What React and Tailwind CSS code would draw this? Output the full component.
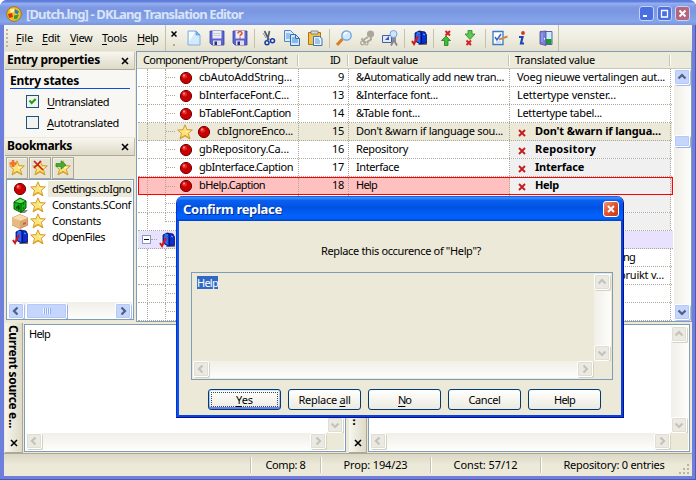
import React, { useLayoutEffect, useRef } from "react";

/* Text set to a fixed advance width; tracking is derived from the measured width. */
function Fit({ w, children, className = "" }) {
  const ref = useRef(null);
  useLayoutEffect(() => {
    const el = ref.current;
    el.style.letterSpacing = "0px";
    const natural = el.getBoundingClientRect().width;
    const n = el.textContent.length;
    el.style.letterSpacing = (w - natural) / n + "px";
  }, [w]);
  return (
    <span ref={ref} className={"inline-block whitespace-pre " + className}>
      {children}
    </span>
  );
}

function Mnemonic({ text, at }) {
  return (
    <>
      {text.slice(0, at)}
      <span className="underline underline-offset-2">{text[at]}</span>
      {text.slice(at + 1)}
    </>
  );
}

function Svg({ children, size = 16, className = "" }) {
  return (
    <svg width={size} height={size} viewBox="0 0 16 16" className={"block shrink-0 " + className}>
      {children}
    </svg>
  );
}

const STAR = "M8 .8 10 5.6l5.3.3-4 3.5 1.7 5.6L8 12l-5 3 1.5-5.6L.7 6l5.3-.4z";

const Ball = () => (
  <Svg>
    <circle cx="8" cy="8" r="5.6" fill="#c80000" stroke="#7a0000" strokeWidth="1" />
    <circle cx="6.6" cy="6.2" r="2.4" fill="#e42a2a" />
    <circle cx="6" cy="5.5" r="1" fill="#ff9c9c" />
  </Svg>
);
const Star = ({ children }) => (
  <Svg>
    <path d={STAR} fill="#fbe27a" stroke="#cf9524" strokeWidth=".9" strokeLinejoin="round" />
    <path d="M8 3 8.8 7 13 7 9.5 9z" fill="#fff6c4" />
    <path d="M4 13.5 8 11.3l4 2.4" fill="none" stroke="#d9a21c" strokeWidth="1" />
    {children}
  </Svg>
);
const Mailbox = () => (
  <Svg>
    <path d="M9 12h7v3H7z" fill="#777" />
    <path d="M4 3 8 1l6 1 1.5 3v8L9 14 4 11z" fill="#0b2fd0" stroke="#04125e" strokeWidth=".8" />
    <path d="M5 3.5 9 4.5V13L5 10.5z" fill="#2c66f5" />
    <path d="M8 1.5c3 0 3 2 2.5 4v8" stroke="#04125e" fill="none" />
    <path d="M6 3h3M12 4l2 1" stroke="#5cb0ff" />
    <path d="M1 11l2 3 4-8" fill="none" stroke="#d01818" strokeWidth="2" />
  </Svg>
);
const Cube = () => (
  <Svg>
    <path d="M10 13h6l-3 3H8z" fill="#888" />
    <path d="M2 5 8 1l6 3v7l-5 4.5L2 12z" fill="#12b512" stroke="#075f07" />
    <path d="M2 5l7 2 5-3M9 7v8" stroke="#075f07" fill="none" />
    <path d="M3 5 8 2l5 2-4 2z" fill="#5fe35f" />
    <path d="M6.8 8v5M6.8 8 4 11h4" stroke="#033803" fill="none" />
    <path d="M11 7h1M11 11h1" stroke="#033803" />
  </Svg>
);
const Box = () => (
  <Svg>
    <path d="M0 5 8 1.5 16 5v7l-8 3.5L0 12z" fill="#d9a86c" stroke="#a87840" strokeWidth=".7" />
    <path d="M0 5 8 1.5 16 5 8 8z" fill="#f7dcae" />
    <path d="M0 5 8 8v7.5L0 12z" fill="#e7bb80" />
    <path d="M11 10l3-1v2l-3 1z" fill="#d8564a" />
  </Svg>
);
const NewDoc = () => (
  <Svg>
    <path d="M2 1h8l4 4v10H2z" fill="#d3eafe" stroke="#7fb0e2" />
    <path d="M3 2h6L3 12z" fill="#f6fbff" />
    <path d="M10 1v4h4z" fill="#7ab6ef" stroke="#5292d2" strokeWidth=".6" />
  </Svg>
);
const Floppy = ({ ask }) => (
  <Svg>
    <path d="M1 1h14v14H3l-2-2z" fill="#5a63cf" stroke="#3a3f9e" strokeWidth=".8" />
    <path d="M3.5 1h9v7.5h-9z" fill="#eceef4" />
    {!ask && <path d="M4.5 3.5h7M4.5 5.5h7" stroke="#c8cbd8" />}
    <path d="M4 10.5h8V15H4z" fill="#dfe0ea" />
    <path d="M5.5 11.5h2.5V15H5.5z" fill="#2a2f86" />
    {ask && <path d="M6 3.5C6 .8 10.3 1 10 3.3 9.8 4.6 8 4.7 8 6.2M8 7.3V8.6" stroke="#e5502c" strokeWidth="1.5" fill="none" />}
  </Svg>
);
const Cut = () => (
  <Svg>
    <path d="M3.5 1 8 10M8.5 1 6.5 10" stroke="#55606e" strokeWidth="1.7" fill="none" />
    <path d="M2 3l3 5" stroke="#8e98a4" />
    <circle cx="6" cy="12.8" r="2" fill="none" stroke="#123cae" strokeWidth="1.5" />
    <circle cx="11.5" cy="10.8" r="2" fill="none" stroke="#123cae" strokeWidth="1.5" />
  </Svg>
);
const Copy = () => (
  <Svg>
    <path d="M.5.5h6l3 3v8h-9z" fill="#d9edff" stroke="#4c88c8" />
    <path d="M2 4h4M2 6h5M2 8h4" stroke="#5b97d8" />
    <path d="M6.5 4.5h5l4 4v7h-9z" fill="#cfe7ff" stroke="#336db3" />
    <path d="M8 8h3M8 10h6M8 12h6" stroke="#4a86cc" />
    <path d="M11.5 4.5v4h4" fill="none" stroke="#336db3" />
  </Svg>
);
const Paste = () => (
  <Svg>
    <path d="M1.5 2.5h12v12h-12z" fill="#f3c04a" stroke="#a97414" />
    <path d="M4 1h7v3H4z" fill="#d8d8d8" stroke="#777" strokeWidth=".8" />
    <path d="M6.5 6.5h6l2.5 2v7H6.5z" fill="#e6f2ff" stroke="#3e73b5" />
    <path d="M8 9h4M8 11h5M8 13h5" stroke="#5b97d8" />
  </Svg>
);
const Find = () => (
  <Svg>
    <path d="M1 15 6.5 9" stroke="#d97e22" strokeWidth="3" />
    <circle cx="10.5" cy="5.5" r="4.7" fill="#cdeaff" stroke="#6d9edb" strokeWidth="1.3" />
    <path d="M8 5c.5-2 2-2.5 3.5-2.3" stroke="#fff" strokeWidth="1.5" fill="none" />
  </Svg>
);
const FindNext = () => (
  <Svg>
    <circle cx="11.5" cy="4" r="3.6" fill="#aca899" />
    <path d="M9 7 5 9.5M2.5 8.5l4 4.5M11.5 7c2 4-2 3-3.5 5.5" stroke="#aca899" strokeWidth="2" fill="none" />
    <circle cx="3.5" cy="13" r="1.8" fill="none" stroke="#aca899" strokeWidth="1.3" />
    <circle cx="7.5" cy="13.5" r="1.5" fill="none" stroke="#aca899" strokeWidth="1.2" />
  </Svg>
);
const Replace = () => (
  <Svg>
    <path d="M.5 5.5h9v7h-9z" fill="#dfe9fb" stroke="#4b5f96" />
    <path d="M3 10 7 6v4z" fill="#2d58c8" />
    <path d="M10 8h3v4l2 3.5M12 10l-3 5.5M11 8v5" stroke="#83868e" strokeWidth="1.8" fill="none" />
    <circle cx="11.5" cy="4" r="3.5" fill="#c8e7ff" stroke="#7fa3cf" />
  </Svg>
);
const CROSS = "l4.5 4.5m0-4.5-4.5 4.5";
const Prev = () => (
  <Svg>
    <path d="M6 6 10.5 10.5H8v5H4.5v-5H1.5z" fill="#43bb38" stroke="#1f7d1a" strokeWidth=".8" />
    <path d={"M5.5 1" + CROSS} stroke="#d42020" strokeWidth="2" />
  </Svg>
);
const Next = () => (
  <Svg>
    <path d="M5 .5h4V4h3L7 9.5 2 4h3z" fill="#5cc650" stroke="#2a8a24" strokeWidth=".8" />
    <path d={"M3.5 10.5" + CROSS} stroke="#d42020" strokeWidth="2" />
  </Svg>
);
const Settings = () => (
  <Svg>
    <path d="M1 1.5h10v13H1z" fill="#fff" stroke="#3b79c6" strokeWidth="1.3" />
    <path d="M3 7l2 3 4-6" stroke="#2a62d0" strokeWidth="1.5" fill="none" />
    <path d="M7 9.5 15.5 6.5" stroke="#c98b52" strokeWidth="2" />
    <path d="M4 12h5" stroke="#9cbfe8" />
  </Svg>
);
const Info = () => (
  <Svg className="-translate-x-px">
    <circle cx="9" cy="3" r="1.9" fill="#d43a18" />
    <path d="M5 7h3.5L7 13.5h3" stroke="#1a44b8" strokeWidth="2.2" fill="none" />
  </Svg>
);
const Door = () => (
  <Svg>
    <path d="M7 1.5h7v13H7z" fill="#c9ecff" stroke="#5e5ea8" />
    <path d="M7.5 9h6v5h-6z" fill="#1e9a34" />
    <path d="M2 1.5 8 1v14.5L2 14z" fill="#7a7fd8" stroke="#4a4c98" strokeWidth=".8" />
    <path d="M4 3v9" stroke="#a9aef0" />
    <path d="M6.5 8v1.5" stroke="#fff" />
  </Svg>
);
const AppLogo = () => (
  <Svg>
    <circle cx="8" cy="8" r="7.3" fill="#f0c020" stroke="#9a6b08" strokeWidth=".8" />
    <path d="M4 3.5l4-1 .5 3.5-4 1z" fill="#fff29a" />
    <path d="M2 8l4-1 1 4-4 1z" fill="#d0341c" />
    <path d="M9 3l4 2.5-1.5 3-3-2z" fill="#2f7ac8" />
    <path d="M8 9.5l5-1-2 4.5H8z" fill="#2da336" />
  </Svg>
);
const RedX = () => (
  <svg width="8" height="8" viewBox="0 0 8 8" className="block shrink-0">
    <path d="M1 1l6 6M7 1 1 7" stroke="#c41c1c" strokeWidth="1.9" />
  </svg>
);
const CloseX = ({ className = "" }) => (
  <svg width="8" height="8" viewBox="0 0 8 8" className={"block shrink-0 " + className}>
    <path d="M1 1l6 6M7 1 1 7" stroke="#000" strokeWidth="1.6" />
  </svg>
);

const CHEVRON = {
  up: "M4.5 9.5 8 6l3.5 3.5",
  down: "M4.5 6.5 8 10l3.5-3.5",
  left: "M9.5 4.5 6 8l3.5 3.5",
  right: "M6.5 4.5 10 8l-3.5 3.5",
};
function ScrollBtn({ dir, off }) {
  return (
    <div
      className={
        "size-4 shrink-0 rounded-[2px] border border-white " +
        (off
          ? "bg-[#ebeae2] shadow-[inset_0_0_0_1px_#e0ded2,1px_1px_0_#d4d1c0]"
          : "bg-[#c5d5fc] shadow-[inset_0_0_0_1px_#b5c8f6,1px_1px_0_#a8bdec]")
      }
    >
      <Svg className="-m-px">
        <path d={CHEVRON[dir]} fill="none" stroke={off ? "#c5c3b9" : "#4d6185"} strokeWidth="2.2" />
      </Svg>
    </div>
  );
}

function DisabledMemo({ children, bg }) {
  return (
    <div className={"flex min-h-0 min-w-0 flex-1 flex-col border border-[#7f9db9] p-px " + bg}>
      <div className="flex min-h-0 flex-1">
        <div className="min-w-0 flex-1">{children}</div>
        <div className="flex w-[17px] flex-col justify-between bg-gradient-to-r from-[#f0efe8] to-[#fdfdfb]">
          <ScrollBtn dir="up" off />
          <ScrollBtn dir="down" off />
        </div>
      </div>
      <div className="flex h-[17px] bg-[#ece9d8]">
        <div className="flex flex-1 justify-between bg-gradient-to-b from-[#f0efe8] to-[#fdfdfb]">
          <ScrollBtn dir="left" off />
          <ScrollBtn dir="right" off />
        </div>
        <div className="w-[18px]" />
      </div>
    </div>
  );
}

const Grip = () => (
  <div className="ml-[2px] flex h-[18px] w-[2px] flex-col justify-between">
    {[0, 1, 2, 3, 4].map((i) => (
      <i key={i} className="size-[2px] bg-[#b9b5a2]" />
    ))}
  </div>
);

const MENUS = [
  ["File", 17, "ml-[8px]"],
  ["Edit", 18, "ml-[9px]"],
  ["View", 22, "ml-[10px]"],
  ["Tools", 25, "ml-[10px]"],
  ["Help", 21, "ml-[10px]"],
];
const TOOLS = [
  [NewDoc, () => <Floppy />, () => <Floppy ask />],
  [Cut, Copy, Paste],
  [Find, FindNext, Replace],
  [Mailbox],
  [Prev, Next],
  [Settings, Info, Door],
];

function Toolbar() {
  return (
    <div className="flex h-[26px] items-stretch bg-gradient-to-b from-[#f6f5ef] via-[#efede0] to-[#e3e0ce]">
      <div className="flex w-[162px] items-center border-r border-[#c3bfa9]">
        <Grip />
        {MENUS.map(([t, w, m]) => (
          <div key={t} className={"-mt-px shrink-0 leading-4 " + m}>
            <Fit w={w}><Mnemonic text={t} at={0} /></Fit>
          </div>
        ))}
      </div>
      <div className="flex w-[393px] items-center border-r border-[#c3bfa9]">
        <div className="flex w-[16px] flex-col items-center gap-[7px]">
          <svg width="6" height="6" viewBox="0 0 6 6" className="block"><path d="M.5.5l5 5m0-5-5 5" stroke="#000" strokeWidth="1.5" /></svg>
          <i className="mr-px size-[2px] bg-[#b0ac99]" />
        </div>
        {TOOLS.map((g, i) => (
          <React.Fragment key={i}>
            {i > 0 && (
              <div className="flex w-[6px] justify-center"><i className="h-[19px] w-px bg-[#c5c2ae]" /></div>
            )}
            {g.map((Icon, j) => (
              <div key={j} className="flex w-[23px] shrink-0 justify-center"><Icon /></div>
            ))}
          </React.Fragment>
        ))}
      </div>
    </div>
  );
}

function PanelHead({ title, w }) {
  return (
    <div className="flex h-[18px] items-center justify-between border-b border-[#aca899] bg-gradient-to-b from-[#f7f6f0] to-[#dedac6] pr-[6px] pl-[2px] shadow-[inset_-1px_0_0_#c2beab]">
      <Fit w={w} className="-mt-px text-[12px] leading-4 font-bold">{title}</Fit>
      <CloseX />
    </div>
  );
}

const BOOKMARKS = [
  [Ball, "dSettings.cbIgno", 79, true],
  [Cube, "Constants.SConf", 79],
  [Box, "Constants", 49],
  [Mailbox, "dOpenFiles", 53],
];

function Sidebar() {
  return (
    <div className="flex w-[131px] flex-col pl-px">
      <PanelHead title="Entry properties" w={93} />
      <div className="h-[67px] bg-[#f8f7f3] pt-[4px] pl-[5px]">
        <div className="flex h-[15px] w-[120px] items-center border-b border-[#0a50d8]">
          <Fit w={69} className="text-[12px] leading-4 font-bold">Entry states</Fit>
        </div>
        <div className="mt-[6px] ml-[16px] flex h-[13px] items-center gap-[8px]">
          <div className="size-[13px] border border-[#1c5180] bg-[#f2f2ee]">
            <svg width="11" height="11" viewBox="0 0 11 11" className="block"><path d="M2.5 4.5 4.7 7 8.7 3" stroke="#21a121" strokeWidth="2.2" fill="none" /></svg>
          </div>
          <Fit w={62} className="leading-4"><Mnemonic text="Untranslated" at={0} /></Fit>
        </div>
        <div className="mt-[8px] ml-[16px] flex h-[13px] items-center gap-[8px]">
          <div className="size-[13px] border border-[#1c5180] bg-[#f2f2ee]" />
          <Fit w={72} className="leading-4"><Mnemonic text="Autotranslated" at={0} /></Fit>
        </div>
      </div>
      <div className="mt-px">
        <PanelHead title="Bookmarks" w={65} />
      </div>
      <div className="flex h-[23px] gap-px pt-px pl-px">
        {[
          <path key="a" d="M4 0v7M.5 3.5h7" stroke="#f0702c" strokeWidth="2.5" />,
          <path key="b" d="M2 1l9 9M9 1 2 8" stroke="#cc1c1c" strokeWidth="1.7" />,
          <path key="c" d="M1 3.5h5V.8L11 5 6 9.2V6.5H1z" fill="#3fae3a" stroke="#1e7a1e" strokeWidth=".6" />,
        ].map((p, i) => (
          <div key={i} className="flex h-[22px] w-[22px] items-center justify-center border border-[#aca899] bg-[#e6e3d3] shadow-[inset_1px_1px_0_#f5f4ec]">
            <Star>{p}</Star>
          </div>
        ))}
      </div>
      <div className="ml-px flex h-[141px] w-[128px] flex-col overflow-hidden border border-[#7f9db9] bg-white px-px pt-px">
        {BOOKMARKS.map(([Icon, t, w, sel]) => (
          <div key={t} className="flex h-4 items-center">
            <div className="ml-[4px]"><Icon /></div>
            <div className="ml-[2px]"><Star /></div>
            <div className={"ml-[2px] flex h-4 flex-1 items-center pl-[4px] " + (sel ? "bg-[#ece9d8]" : "")}>
              <Fit w={w} className="shrink-0 leading-4">{t}</Fit>
            </div>
          </div>
        ))}
        <div className="mt-auto flex h-[17px] items-center bg-gradient-to-b from-[#f0efe8] to-[#fdfdfb]">
          <ScrollBtn dir="left" />
          <div className="ml-[2px] flex h-4 w-[41px] items-center justify-center gap-px rounded-[2px] border border-white bg-[#c5d5fc] shadow-[inset_0_0_0_1px_#b5c8f6,1px_1px_0_#98b0e4]">
            {[0, 1, 2, 3].map((i) => <i key={i} className="h-[6px] w-px bg-[#eef4fe] shadow-[1px_0_0_#8cb0f8]" />)}
          </div>
          <div className="mr-px ml-auto"><ScrollBtn dir="right" /></div>
        </div>
      </div>
    </div>
  );
}

const ROWS = [
  { c: "cbAutoAddString...", cw: 93, id: 9, d: "&Automatically add new tran...", dw: 148, t: "Voeg nieuwe vertalingen aut...", tw: 148 },
  { c: "bInterfaceFont.C...", cw: 90, id: 13, d: "&Interface font...", dw: 82, t: "Lettertype venster...", tw: 99 },
  { c: "bTableFont.Caption", cw: 92, id: 14, d: "&Table font...", dw: 64, t: "Lettertype tabel...", tw: 85 },
  { c: "cbIgnoreEnco...", cw: 76, id: 15, d: "Don't &warn if language sou...", dw: 147, t: "Don't &warn if langua...", tw: 126, x: true, mark: true },
  { c: "gbRepository.Ca...", cw: 90, id: 16, d: "Repository", dw: 52, t: "Repository", tw: 61, x: true },
  { c: "gbInterface.Caption", cw: 94, id: 17, d: "Interface", dw: 43, t: "Interface", tw: 49, x: true },
  { c: "bHelp.Caption", cw: 66, id: 18, d: "Help", dw: 21, t: "Help", tw: 24, x: true, hit: true },
  { grey: true },
  { grey: true, last: true },
  { group: true },
  { t: "ng", tw: 12, pad: "pl-[113px]" },
  { t: "bruikt v...", tw: 45, pad: "pl-[109px]" },
  {},
  {},
];

const VLine = ({ className = "" }) => <div className={"w-0 shrink-0 border-l border-dotted border-[#aca899] " + className} />;

function Row({ r }) {
  const bg = r.mark ? "bg-[#ece9d8]" : r.hit ? "bg-[#ffc0c0]" : r.group ? "bg-[#e8e2fe]" : "bg-white";
  const frame = r.hit ? "border border-[#f00]" : "border-b border-dotted border-[#aca899]";
  const cell = r.group ? "" : "border-r border-dotted border-[#aca899] ";
  const lift = r.hit ? "mb-[2px] " : "mb-[2px] ";
  return (
    <div className={"flex h-[18px] shrink-0 leading-4 " + (r.hit || r.group ? "w-[535px] " : "w-[534px] ") + bg + " " + frame}>
      <div className={"flex shrink-0 items-center overflow-hidden " + cell + (r.hit ? "w-[160px]" : "w-[161px]")}>
        {r.group ? (
          <>
            <div className="ml-[4px] flex size-[9px] items-center justify-center border border-[#7f9db9] bg-white"><i className="h-px w-[5px] bg-black" /></div>
            <div className="w-[6px] border-t border-dotted border-[#aca899]" />
            <div className="ml-[2px]"><Mailbox /></div>
          </>
        ) : (
          <>
            <VLine className={"h-[18px] " + (r.hit ? "ml-[8px]" : "ml-[9px]")} />
            <VLine className={"ml-[17px] " + (r.last ? "h-[9px] self-start" : "h-[18px]")} />
            <div className="w-[9px] shrink-0 border-t border-dotted border-[#aca899]" />
            <div className={"flex items-center " + (r.mark ? "ml-[2px] gap-[3px]" : "ml-[3px]")}>
              {r.mark && <Star />}
              {r.c && <Ball />}
            </div>
            {r.c && <Fit w={r.cw} className={lift + "shrink-0 " + (r.mark ? "ml-[5px]" : "ml-[5px]")}>{r.c}</Fit>}
          </>
        )}
      </div>
      <div className={"flex w-[50px] shrink-0 items-center justify-end pr-[4px] " + cell}>
        {r.id && <Fit w={r.id > 9 ? 12 : 6} className={lift}>{r.id}</Fit>}
      </div>
      <div className={"flex w-[161px] shrink-0 items-center pl-[7px] " + cell}>
        {r.d && <Fit w={r.dw} className={lift}>{r.d}</Fit>}
      </div>
      <div className={"flex w-[161px] shrink-0 items-center " + cell + ((r.x && !r.mark) || r.grey ? "bg-[#f0f0f0] " : "") + (r.pad || (r.x ? "pl-[8px]" : "pl-[7px]"))}>
        {r.x && <div className="mt-[2px]"><RedX /></div>}
        {r.t && <Fit w={r.tw} className={lift + (r.x ? "ml-[9px] font-bold" : "")}>{r.t}</Fit>}
      </div>
    </div>
  );
}

function Tree() {
  const head = "flex h-full items-center shrink-0 ";
  const sep = <i className="h-[11px] w-[2px] border-l border-[#c7c5b2] bg-white" />;
  return (
    <div className="flex w-[556px] flex-col overflow-hidden border border-[#7f9db9] bg-white">
      <div className="flex h-[17px] shrink-0 items-center border-b border-[#cbc7b8] bg-[#ebeadb] pl-px leading-4">
        <div className={head + "w-[161px] justify-between pl-[5px]"}><Fit w={144}>Component/Property/Constant</Fit>{sep}</div>
        <div className={head + "w-[50px] justify-end gap-[7px]"}><Fit w={10}>ID</Fit>{sep}</div>
        <div className={head + "w-[161px] justify-between pl-[5px]"}><Fit w={64}>Default value</Fit>{sep}</div>
        <div className={head + "w-[161px] justify-between pl-[5px]"}><Fit w={80}>Translated value</Fit>{sep}</div>
      </div>
      <div className="flex min-h-0 flex-1">
        <div className="flex w-[537px] flex-col overflow-hidden pl-px">
          {ROWS.map((r, i) => <Row key={i} r={r} />)}
        </div>
        <div className="flex w-[17px] flex-col bg-gradient-to-r from-[#f0efe8] to-[#fdfdfb] pb-px">
          <ScrollBtn dir="up" />
          <div className="mt-[50px] h-[12px] w-4 rounded-[2px] border border-white bg-[#c5d5fc] shadow-[inset_0_0_0_1px_#b5c8f6,1px_1px_0_#98b0e4]" />
          <div className="mt-auto"><ScrollBtn dir="down" /></div>
        </div>
      </div>
    </div>
  );
}

function VerticalFit({ h, children }) {
  const ref = useRef(null);
  useLayoutEffect(() => {
    const el = ref.current;
    el.style.letterSpacing = "0px";
    const natural = el.getBoundingClientRect().height;
    el.style.letterSpacing = (h - natural) / el.textContent.length + "px";
  }, [h]);
  return <span ref={ref} className="inline-block text-[12px] leading-4 font-bold whitespace-pre">{children}</span>;
}

function SideCaption({ text, h }) {
  return (
    <div className="flex h-[130px] w-[18px] shrink-0 flex-col items-center justify-between border-r border-b border-[#aca899] bg-gradient-to-r from-[#f7f6f0] to-[#dedac6] pt-[2px] pb-[5px]">
      <div className="-ml-px [writing-mode:vertical-rl]">
        <VerticalFit h={h}>{text}</VerticalFit>
      </div>
      <CloseX className="ml-px" />
    </div>
  );
}

const DIALOG_BUTTONS = [
  ["Yes", 0, 17],
  ["Replace all", 8, 52],
  ["No", 0, 13],
  ["Cancel", -1, 32],
  ["Help", -1, 21],
];

function Dialog() {
  return (
    <div className="absolute top-[196px] left-[176px] flex h-[222px] w-[448px] flex-col overflow-hidden rounded-t-[7px] border-x border-b border-t-0 border-l-[#0831d9] border-r-[#00138c] border-b-[#00138c] bg-[#ece9d8] px-[2px] shadow-[inset_2px_0_0_#0a55e8,inset_-2px_-2px_0_#0a3fe0]">
      <div className="-mx-[2px] flex h-[25px] shrink-0 items-center justify-between bg-[linear-gradient(#0a54d8_0%,#3c91ff_7%,#0b5ff0_18%,#0052e2_45%,#0061fc_78%,#0060f8_90%,#0040c0_100%)] pr-[4px] pl-[6px]">
        <Fit w={99} className="text-[13px] leading-5 font-bold text-white [text-shadow:1px_1px_0_#0a2a80]">Confirm replace</Fit>
        <div className="flex size-4 items-center justify-center rounded-[3px] border border-white bg-gradient-to-br from-[#f0957a] via-[#e0512c] to-[#c33a12]">
          <svg width="8" height="8" viewBox="0 0 8 8"><path d="M1 1l6 6M7 1 1 7" stroke="#fff" strokeWidth="2" /></svg>
        </div>
      </div>
      <div className="flex h-[51px] items-center justify-center pt-[9px] pl-[2px] leading-4">
        <Fit w={160}>Replace this occurence of "Help"?</Fit>
      </div>
      <div className="mr-[8px] ml-[12px] flex h-[108px]">
        <DisabledMemo bg="bg-[#ece9d8]">
          <div className="mt-[2px] ml-[4px] h-[13px] w-[21px] bg-[#316ac5] leading-[13px] text-white"><Fit w={21}>Help</Fit></div>
        </DisabledMemo>
      </div>
      <div className="mt-[9px] ml-[29px] flex gap-[7px]">
        {DIALOG_BUTTONS.map(([t, at, w], i) => (
          <button
            key={t}
            className={
              "flex h-[21px] w-[73px] items-center justify-center rounded-[3px] border border-[#003c74] bg-gradient-to-b from-white to-[#eceae0] p-[2px] leading-4 " +
              (i === 0 ? "shadow-[inset_0_1px_0_#cee7ff,inset_0_-2px_0_#6982ee,inset_1px_0_0_#a8c4f4,inset_-1px_0_0_#a8c4f4]" : "")
            }
          >
            <span className={"flex h-full w-full items-center justify-center border " + (i === 0 ? "border-dotted border-[#444]" : "border-transparent")}>
              <Fit w={w}>{at < 0 ? t : <Mnemonic text={t} at={at} />}</Fit>
            </span>
          </button>
        ))}
      </div>
    </div>
  );
}

const STATUS = [
  ["Comp: 8", 40, "w-[70px]"],
  ["Prop: 194/23", 64, "w-[110px]"],
  ["Const: 57/12", 64, "w-[110px]"],
  ["Repository: 0 entries", 101, "w-[147px]"],
];

export default function App() {
  return (
    <div className="relative flex h-[480px] w-[696px] flex-col overflow-hidden rounded-t-[7px] bg-[#6f80dc] font-['Noto_Sans','DejaVu_Sans',sans-serif] text-[11px] text-black shadow-[inset_-1px_-1px_0_#5058b4] select-none">
      <div className="flex h-[25px] shrink-0 items-center bg-[linear-gradient(#6378d2_0%,#5f80de_6%,#93aef0_14%,#7e98e2_30%,#7b97e1_50%,#86a5ea_85%,#7a93df_100%)] pt-[2px] pr-[6px] pl-[6px]">
        <AppLogo />
        <Fit w={217} className="ml-[4px] text-[13px] leading-5 font-bold text-[#d8e4f8]">[Dutch.lng] - DKLang Translation Editor</Fit>
        <div className="ml-auto flex gap-[3px]">
          {["min", "max", "close"].map((k) => (
            <div key={k} className={"flex size-[15px] items-center justify-center rounded-[3px] border border-[#c6d2f6] " + (k === "close" ? "bg-[#b5667c]" : "bg-[#4a6fe0]")}>
              <svg width="9" height="9" viewBox="0 0 9 9">
                {k === "min" && <path d="M1 7h4" stroke="#fff" strokeWidth="2" />}
                {k === "max" && <path d="M1 1.5h7M1.5 1v7h6V1" stroke="#fff" fill="none" strokeWidth="1.3" />}
                {k === "close" && <path d="M1.5 1.5l6 6m0-6-6 6" stroke="#fff" strokeWidth="1.9" />}
              </svg>
            </div>
          ))}
        </div>
      </div>
      <div className="mx-[4px] mb-[4px] flex min-h-0 flex-1 flex-col bg-[#ece9d8]">
        <Toolbar />
        <div className="flex h-[271px] shrink-0">
          <div className="flex pt-px"><Sidebar /></div>
          <div className="ml-px flex"><Tree /></div>
        </div>
        <div className="flex h-[131px] shrink-0 pt-px pl-px">
          <SideCaption text="Current source e..." h={103} />
          <div className="mt-px ml-px flex h-[128px] w-[322px]">
            <DisabledMemo bg="bg-white"><div className="ml-[3px] leading-4"><Fit w={21}>Help</Fit></div></DisabledMemo>
          </div>
          <div className="ml-[3px] flex"><SideCaption text="Current transl..." h={101} /></div>
          <div className="mt-px ml-px flex h-[128px] w-[322px]">
            <DisabledMemo bg="bg-white" />
          </div>
        </div>
        <div className="flex flex-1 items-center border-t border-[#aca899] bg-gradient-to-b from-[#dcd8c6] via-[#ece9d8] to-[#ece9d8] leading-4">
          <div className="w-[246px]" />
          {STATUS.map(([t, w, cls]) => (
            <div key={t} className={"flex h-[16px] shrink-0 items-center justify-center border-l border-[#c5c2b0] shadow-[inset_1px_0_0_#fff] " + cls}>
              <Fit w={w}>{t}</Fit>
            </div>
          ))}
          <svg width="12" height="12" viewBox="0 0 12 12" className="-ml-[8px] self-end">
            {[[8, 0], [4, 4], [8, 4], [0, 8], [4, 8], [8, 8]].map(([x, y]) => (
              <rect key={x + "-" + y} x={x} y={y} width="2" height="2" fill="#b8b4a2" />
            ))}
          </svg>
        </div>
      </div>
      <Dialog />
    </div>
  );
}
